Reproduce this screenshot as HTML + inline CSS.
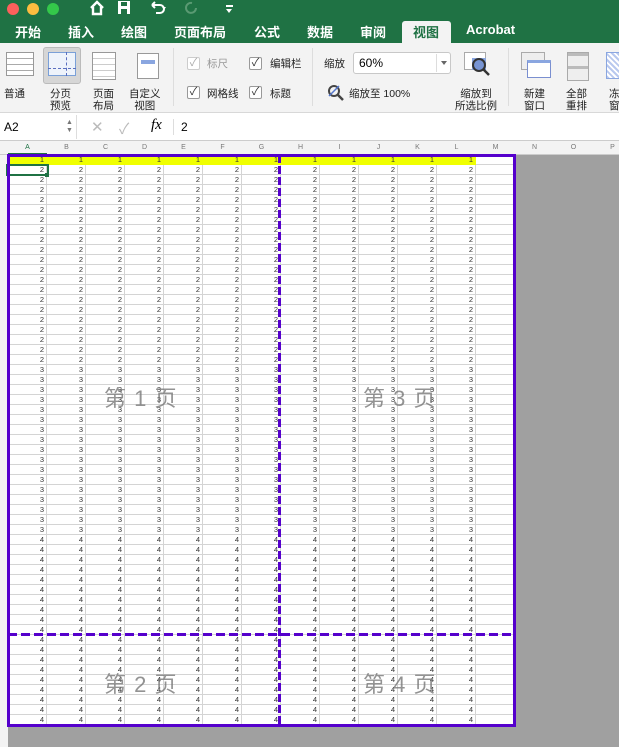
<!DOCTYPE html>
<html><head><meta charset="utf-8">
<style>
*{margin:0;padding:0;box-sizing:border-box}
body{width:619px;height:747px;overflow:hidden;background:#a0a0a0;font-family:"Liberation Sans","Noto Sans CJK SC",sans-serif;position:relative}
.abs{position:absolute}
#title{left:0;top:0;width:619px;height:18px;background:#1f7244}
#tabs{left:0;top:18px;width:619px;height:25px;background:#1f7244}
.tab{position:absolute;top:4px;color:#fff;font-size:13px;font-weight:bold}
#ribbon{left:0;top:43px;width:619px;height:70px;background:#f3f3f3;border-bottom:1px solid #d8d8d8}
.lbl{position:absolute;font-size:10.5px;color:#222;text-align:center;line-height:12px}
.cb{position:absolute;width:13px;height:13px;border:1px solid #999;background:#fff;border-radius:2px;font-size:11px;line-height:11px;text-align:center;color:#333}
#fbar{left:0;top:113px;width:619px;height:28px;background:#fff;border-bottom:1px solid #ccc}
#colh{left:0;top:141px;width:619px;height:14px;background:#f3f3f3;border-bottom:1px solid #ccc}
.ch{position:absolute;top:3px;font-size:7px;color:#777;width:39px;text-align:center}
#rowh{left:0;top:155px;width:8px;height:592px;background:#f3f3f3}
#grid{left:8px;top:155px;width:507px;height:570px;background:#fff;
background-image:repeating-linear-gradient(to right,transparent 0 38px,#d4d4d4 38px 39px),repeating-linear-gradient(to bottom,transparent 0 9px,#d4d4d4 9px 10px)}
.col{position:absolute;top:155px;width:39px;font-size:7.5px;line-height:10px;white-space:pre;text-align:right;padding-right:3px;color:#333;font-family:"Liberation Sans",sans-serif}
.pg{position:absolute;font-size:22px;color:rgba(120,120,120,.8);letter-spacing:1px}
</style></head><body>
<div id="title" class="abs">
 <div class="abs" style="left:7px;top:3px;width:12px;height:12px;border-radius:50%;background:#fc605c"></div>
 <div class="abs" style="left:27px;top:3px;width:12px;height:12px;border-radius:50%;background:#fdbc40"></div>
 <div class="abs" style="left:47px;top:3px;width:12px;height:12px;border-radius:50%;background:#34c84a"></div>
 <svg class="abs" style="left:88px;top:0" width="120" height="16"><path d="M3 8 L9 2 L15 8 M5 7 V14 H13 V7" stroke="#fff" stroke-width="2.4" fill="none"/>
 <rect x="30" y="1" width="12" height="13" fill="#fff"/><rect x="33" y="2" width="6" height="4" fill="#1f7244"/><rect x="33" y="9" width="6" height="5" fill="#1f7244"/>
 <path d="M64 5 H72 A4 4 0 0 1 72 13 H68 M64 5 L67 2 M64 5 L67 8" stroke="#fff" stroke-width="2" fill="none"/><path d="M74 7 l2 3 l2 -3z" fill="#fff"/>
 <path d="M104 3 A5 5 0 1 0 108 8" stroke="#5a9a73" stroke-width="2" fill="none"/></svg>
 <div class="abs" style="left:226px;top:5px;width:7px;height:2px;background:#fff"></div>
 <div class="abs" style="left:226px;top:9px;border:3.5px solid transparent;border-top:4px solid #fff"></div>
</div>
<div id="tabs" class="abs">
 <div class="tab" style="left:15px">开始</div><div class="tab" style="left:68px">插入</div><div class="tab" style="left:121px">绘图</div><div class="tab" style="left:174px">页面布局</div><div class="tab" style="left:254px">公式</div><div class="tab" style="left:307px">数据</div><div class="tab" style="left:360px">审阅</div>
 <div class="abs" style="left:402px;top:3px;width:49px;height:22px;background:#f3f3f3;border-radius:3px 3px 0 0"></div>
 <div class="tab" style="left:413px;color:#1f7244">视图</div><div class="tab" style="left:466px">Acrobat</div>
</div>
<div id="ribbon" class="abs">
 <div class="abs" style="left:6px;top:9px;width:28px;height:24px;border:1px solid #999;background:repeating-linear-gradient(to bottom,#fff 0 5px,#aaa 5px 6px)"></div>
 <div class="lbl" style="left:4px;top:45px">普通</div>
 <div class="abs" style="left:43px;top:4px;width:38px;height:37px;background:#d6d6d6;border:1px solid #bbb;border-radius:3px"></div>
 <div class="abs" style="left:48px;top:9px;width:28px;height:24px;border:1px solid #7aa0d8;background:#eef3fb"></div>
 <div class="abs" style="left:66px;top:9px;width:0;height:24px;border-left:1px dashed #5a6fc0"></div>
 <div class="abs" style="left:48px;top:25px;width:28px;border-top:1px dashed #5a6fc0"></div>
 <div class="lbl" style="left:50px;top:45px">分页<br>预览</div>
 <div class="abs" style="left:92px;top:9px;width:24px;height:28px;border:1px solid #999;background:repeating-linear-gradient(to bottom,#fff 0 5px,#ccc 5px 6px)"></div>
 <div class="lbl" style="left:93px;top:45px">页面<br>布局</div>
 <div class="abs" style="left:137px;top:10px;width:22px;height:26px;border:1px solid #999;background:#fff"></div>
 <div class="abs" style="left:141px;top:17px;width:14px;height:4px;background:#8aa6e0"></div>
 <div class="lbl" style="left:129px;top:45px">自定义<br>视图</div>
 <div class="abs" style="left:173px;top:5px;width:1px;height:58px;background:#ddd"></div>
 <div class="cb" style="left:187px;top:14px;color:#aaa;border-color:#ccc">✓</div><div class="lbl" style="left:207px;top:15px;color:#999">标尺</div>
 <div class="cb" style="left:249px;top:14px">✓</div><div class="lbl" style="left:270px;top:15px">编辑栏</div>
 <div class="cb" style="left:187px;top:43px">✓</div><div class="lbl" style="left:207px;top:45px">网格线</div>
 <div class="cb" style="left:249px;top:43px">✓</div><div class="lbl" style="left:270px;top:45px">标题</div>
 <div class="abs" style="left:312px;top:5px;width:1px;height:58px;background:#ddd"></div>
 <div class="lbl" style="left:324px;top:15px">缩放</div>
 <div class="abs" style="left:353px;top:9px;width:98px;height:22px;border:1px solid #c8c8c8;background:#fff;border-radius:3px;font-size:12px;padding:3px 0 0 5px">60%</div>
 <div class="abs" style="left:436px;top:11px;width:1px;height:18px;background:#ddd"></div>
 <div class="abs" style="left:441px;top:18px;border:3px solid transparent;border-top:4px solid #666"></div>
 <svg class="abs" style="left:327px;top:41px" width="18" height="18"><circle cx="7" cy="7" r="5" stroke="#444" stroke-width="2" fill="none"/><path d="M11 11 L16 16" stroke="#444" stroke-width="2.5"/><path d="M2 12 L12 2" stroke="#5577cc" stroke-width="1.5"/></svg>
 <div class="lbl" style="left:349px;top:45px">缩放至 100%</div>
 <div class="abs" style="left:464px;top:9px;width:22px;height:18px;border:1px solid #aaa;background:#fff"></div>
 <div class="abs" style="left:472px;top:15px;width:14px;height:12px;background:#8aa6e0"></div>
 <svg class="abs" style="left:470px;top:13px" width="24" height="24"><circle cx="9" cy="9" r="6" stroke="#333" stroke-width="2" fill="rgba(100,130,200,.5)"/><path d="M13 13 L19 19" stroke="#333" stroke-width="2.5"/></svg>
 <div class="lbl" style="left:455px;top:45px">缩放到<br>所选比例</div>
 <div class="abs" style="left:508px;top:5px;width:1px;height:58px;background:#ddd"></div>
 <div class="abs" style="left:521px;top:9px;width:24px;height:18px;border:1px solid #aaa;background:#eee"></div>
 <div class="abs" style="left:527px;top:17px;width:24px;height:18px;border:1px solid #7a8fd0;background:#fff;border-top:3px solid #8aa6e0"></div>
 <div class="lbl" style="left:524px;top:45px">新建<br>窗口</div>
 <div class="abs" style="left:567px;top:9px;width:22px;height:29px;border:1px solid #aaa;background:linear-gradient(#bbb 0 3px,#eee 3px 13px,#bbb 13px 16px,#eee 16px)"></div>
 <div class="lbl" style="left:566px;top:45px">全部<br>重排</div>
 <div class="abs" style="left:606px;top:9px;width:14px;height:27px;border:1px solid #8aa6e0;background:repeating-linear-gradient(45deg,#b8c8ee 0 2px,#fff 2px 4px)"></div>
 <div class="lbl" style="left:609px;top:45px">冻<br>窗</div>
</div>
<div id="fbar" class="abs">
 <div class="abs" style="left:0;top:2px;width:77px;height:24px;border-right:1px solid #ddd;font-size:12px;padding:5px 0 0 4px">A2</div>
 <div class="abs" style="left:66px;top:6px;font-size:7px;color:#777;line-height:8px">▲<br>▼</div>
 <div class="abs" style="left:91px;top:5px;font-size:15px;color:#bbb">✕</div>
 <div class="abs" style="left:119px;top:5px;font-size:15px;color:#bbb">✓</div>
 <div class="abs" style="left:151px;top:4px;font-size:15px;font-style:italic;font-family:'Liberation Serif',serif">fx</div>
 <div class="abs" style="left:173px;top:6px;width:1px;height:16px;background:#ddd"></div>
 <div class="abs" style="left:181px;top:7px;font-size:12px">2</div>
</div>
<div id="colh" class="abs">
 <div class="abs" style="left:8px;top:12px;width:39px;height:2px;background:#1f7244"></div>
 <div class="ch" style="left:8px;color:#1f7244">A</div><div class="ch" style="left:47px">B</div><div class="ch" style="left:86px">C</div><div class="ch" style="left:125px">D</div><div class="ch" style="left:164px">E</div><div class="ch" style="left:203px">F</div><div class="ch" style="left:242px">G</div><div class="ch" style="left:281px">H</div><div class="ch" style="left:320px">I</div><div class="ch" style="left:359px">J</div><div class="ch" style="left:398px">K</div><div class="ch" style="left:437px">L</div><div class="ch" style="left:476px">M</div><div class="ch" style="left:515px">N</div><div class="ch" style="left:554px">O</div><div class="ch" style="left:593px">P</div>
</div>
<div id="rowh" class="abs"></div>
<div id="grid" class="abs"></div>
<div class="abs" style="left:8px;top:155px;width:468px;height:10px;background:#f0ff00"></div>
<div class="col" style="left:8px">1
2
2
2
2
2
2
2
2
2
2
2
2
2
2
2
2
2
2
2
2
3
3
3
3
3
3
3
3
3
3
3
3
3
3
3
3
3
4
4
4
4
4
4
4
4
4
4
4
4
4
4
4
4
4
4
4</div>
<div id="cols"></div>
<div class="col" style="left:47px">1
2
2
2
2
2
2
2
2
2
2
2
2
2
2
2
2
2
2
2
2
3
3
3
3
3
3
3
3
3
3
3
3
3
3
3
3
3
4
4
4
4
4
4
4
4
4
4
4
4
4
4
4
4
4
4
4</div>
<div class="col" style="left:86px">1
2
2
2
2
2
2
2
2
2
2
2
2
2
2
2
2
2
2
2
2
3
3
3
3
3
3
3
3
3
3
3
3
3
3
3
3
3
4
4
4
4
4
4
4
4
4
4
4
4
4
4
4
4
4
4
4</div>
<div class="col" style="left:125px">1
2
2
2
2
2
2
2
2
2
2
2
2
2
2
2
2
2
2
2
2
3
3
3
3
3
3
3
3
3
3
3
3
3
3
3
3
3
4
4
4
4
4
4
4
4
4
4
4
4
4
4
4
4
4
4
4</div>
<div class="col" style="left:164px">1
2
2
2
2
2
2
2
2
2
2
2
2
2
2
2
2
2
2
2
2
3
3
3
3
3
3
3
3
3
3
3
3
3
3
3
3
3
4
4
4
4
4
4
4
4
4
4
4
4
4
4
4
4
4
4
4</div>
<div class="col" style="left:203px">1
2
2
2
2
2
2
2
2
2
2
2
2
2
2
2
2
2
2
2
2
3
3
3
3
3
3
3
3
3
3
3
3
3
3
3
3
3
4
4
4
4
4
4
4
4
4
4
4
4
4
4
4
4
4
4
4</div>
<div class="col" style="left:242px">1
2
2
2
2
2
2
2
2
2
2
2
2
2
2
2
2
2
2
2
2
3
3
3
3
3
3
3
3
3
3
3
3
3
3
3
3
3
4
4
4
4
4
4
4
4
4
4
4
4
4
4
4
4
4
4
4</div>
<div class="col" style="left:281px">1
2
2
2
2
2
2
2
2
2
2
2
2
2
2
2
2
2
2
2
2
3
3
3
3
3
3
3
3
3
3
3
3
3
3
3
3
3
4
4
4
4
4
4
4
4
4
4
4
4
4
4
4
4
4
4
4</div>
<div class="col" style="left:320px">1
2
2
2
2
2
2
2
2
2
2
2
2
2
2
2
2
2
2
2
2
3
3
3
3
3
3
3
3
3
3
3
3
3
3
3
3
3
4
4
4
4
4
4
4
4
4
4
4
4
4
4
4
4
4
4
4</div>
<div class="col" style="left:359px">1
2
2
2
2
2
2
2
2
2
2
2
2
2
2
2
2
2
2
2
2
3
3
3
3
3
3
3
3
3
3
3
3
3
3
3
3
3
4
4
4
4
4
4
4
4
4
4
4
4
4
4
4
4
4
4
4</div>
<div class="col" style="left:398px">1
2
2
2
2
2
2
2
2
2
2
2
2
2
2
2
2
2
2
2
2
3
3
3
3
3
3
3
3
3
3
3
3
3
3
3
3
3
4
4
4
4
4
4
4
4
4
4
4
4
4
4
4
4
4
4
4</div>
<div class="col" style="left:437px">1
2
2
2
2
2
2
2
2
2
2
2
2
2
2
2
2
2
2
2
2
3
3
3
3
3
3
3
3
3
3
3
3
3
3
3
3
3
4
4
4
4
4
4
4
4
4
4
4
4
4
4
4
4
4
4
4</div>
<div class="pg" style="left:104px;top:381px">第 1 页</div>
<div class="pg" style="left:363px;top:381px">第 3 页</div>
<div class="pg" style="left:104px;top:667px">第 2 页</div>
<div class="pg" style="left:363px;top:667px">第 4 页</div>
<div class="abs" style="left:6px;top:164px;width:43px;height:12px;border:2px solid #1f7244"></div>
<div class="abs" style="left:45px;top:173px;width:4px;height:4px;background:#1f7244"></div>
<div class="abs" style="left:278px;top:155px;width:3px;height:570px;background:repeating-linear-gradient(to bottom,#5500cc 0 8px,transparent 8px 11px)"></div>
<div class="abs" style="left:8px;top:633px;width:507px;height:3px;background:repeating-linear-gradient(to right,#5500cc 0 9px,transparent 9px 13px)"></div>
<div class="abs" style="left:7px;top:154px;width:509px;height:573px;border:3px solid #5500cc"></div>
</body></html>
